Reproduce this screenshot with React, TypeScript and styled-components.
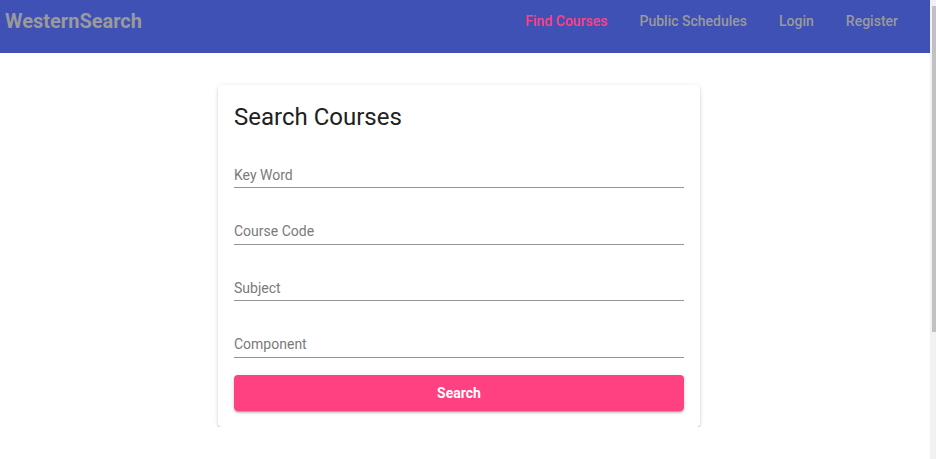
import React from "react";
import styled, { createGlobalStyle } from "styled-components";

const GlobalStyle = createGlobalStyle`
  body {
    margin: 0;
    font-family: Roboto, "Liberation Sans", Arial, sans-serif;
    background: #ffffff;
  }
`;

const Page = styled.div`
  margin-right: 6px;
`;

const ScrollTrack = styled.div`
  position: fixed;
  top: 0;
  right: 0;
  bottom: 0;
  width: 6px;
  background: #f1f1f1;
`;

const ScrollThumb = styled.div`
  margin: 6px 0 0 2px;
  height: 326px;
  background: #c1c1c1;
`;

const NavBar = styled.header`
  height: 53px;
  box-sizing: border-box;
  background: #3f51b5;
  display: flex;
  align-items: flex-start;
  justify-content: space-between;
  padding: 0 16px 0 5px;
`;

const Brand = styled.a`
  height: 42px;
  display: flex;
  align-items: center;
  font-size: 20px;
  font-weight: 700;
  color: #9a9a9a;
  text-decoration: none;
`;

const NavLinks = styled.nav`
  display: flex;
  height: 42px;
  align-items: center;
`;

const NavLink = styled.a<{ $active?: boolean }>`
  padding: 0 16px;
  font-size: 14px;
  font-weight: 500;
  color: ${(p) => (p.$active ? "#ff4081" : "#9a9a9a")};
  text-decoration: none;
`;

const Main = styled.main`
  padding: 32px 0 0 218px;
`;

const Card = styled.section`
  width: 482px;
  box-sizing: border-box;
  padding: 16px;
  background: #fff;
  border-radius: 4px;
  box-shadow: 0 3px 1px -2px rgba(0, 0, 0, 0.2), 0 2px 2px 0 rgba(0, 0, 0, 0.14),
    0 1px 5px 0 rgba(0, 0, 0, 0.12);
`;

const Title = styled.h1`
  margin: 2px 0 0;
  font-size: 24px;
  line-height: 28px;
  font-weight: 400;
  color: #212121;
`;

const Form = styled.form`
  display: flex;
  flex-direction: column;
  gap: 33.67px;
  margin-top: 34px;
`;

const Input = styled.input`
  display: block;
  width: 100%;
  box-sizing: border-box;
  border: none;
  border-bottom: 1px solid #949494;
  padding: 1px 0 4px;
  margin: 0;
  font-family: inherit;
  font-size: 14px;
  line-height: 17px;
  height: 23px;
  color: #212121;
  background: transparent;
  outline: none;
  &::placeholder {
    color: #7a7a7a;
  }
`;

const Button = styled.button`
  margin-top: -16.67px;
  height: 36px;
  width: 100%;
  border: none;
  border-radius: 4px;
  background: #ff4081;
  color: #fff;
  font-family: inherit;
  font-size: 14px;
  font-weight: 700;
  cursor: pointer;
  box-shadow: 0 3px 1px -2px rgba(0, 0, 0, 0.2), 0 2px 2px 0 rgba(0, 0, 0, 0.14),
    0 1px 5px 0 rgba(0, 0, 0, 0.12);
`;

const fields = ["Key Word", "Course Code", "Subject", "Component"];

export default function App() {
  return (
    <>
      <GlobalStyle />
      <Page>
        <NavBar>
          <Brand href="#">WesternSearch</Brand>
          <NavLinks>
            <NavLink href="#" $active>
              Find Courses
            </NavLink>
            <NavLink href="#">Public Schedules</NavLink>
            <NavLink href="#">Login</NavLink>
            <NavLink href="#">Register</NavLink>
          </NavLinks>
        </NavBar>
        <Main>
          <Card>
            <Title>Search Courses</Title>
            <Form onSubmit={(e) => e.preventDefault()}>
              {fields.map((f) => (
                <Input key={f} placeholder={f} />
              ))}
              <Button type="submit">Search</Button>
            </Form>
          </Card>
        </Main>
      </Page>
      <ScrollTrack>
        <ScrollThumb />
      </ScrollTrack>
    </>
  );
}
